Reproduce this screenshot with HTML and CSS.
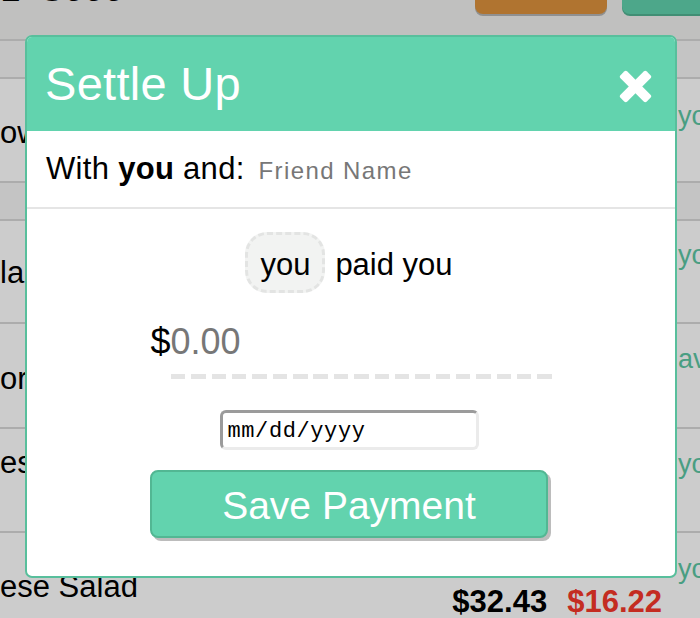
FILE: index.html
```html
<!DOCTYPE html>
<html lang="en">
<head>
<meta charset="utf-8">
<title>Settle Up</title>
<link rel="stylesheet" href="styles.css">
</head>
<body>
<div class="page">
  <header class="topbar">
    <h1 class="page-title">L&nbsp;&nbsp;Sooo</h1>
    <div class="actions">
      <button class="top-btn top-btn-orange" type="button"></button>
      <button class="top-btn top-btn-green" type="button"></button>
    </div>
  </header>
  <div class="band band-1"></div>
  <div class="row row-1"><span class="name">ow</span><span class="payer">you</span></div>
  <div class="band band-2"></div>
  <div class="row row-2"><span class="name">la</span><span class="payer">you</span></div>
  <div class="row row-3"><span class="name">orr</span><span class="payer">avid</span></div>
  <div class="row row-4"><span class="name">ese</span><span class="payer">you</span></div>
  <div class="row row-5">
    <span class="name">ese Salad</span>
    <span class="totals"><span class="total-owed">$32.43</span><span class="total-due">$16.22</span></span>
    <span class="payer">you</span>
  </div>
</div>

<div class="overlay"></div>

<div class="modal">
  <div class="modal-header">
    <h2 class="modal-title">Settle Up</h2>
    <button class="close-btn" type="button" aria-label="Close">
      <svg width="33" height="33" viewBox="-16.5 -16.5 33 33" aria-hidden="true">
        <rect x="-18.6" y="-4.8" width="37.2" height="9.6" rx="2.2" fill="#fff" transform="rotate(45)"/>
        <rect x="-18.6" y="-4.8" width="37.2" height="9.6" rx="2.2" fill="#fff" transform="rotate(-45)"/>
      </svg>
    </button>
  </div>
  <div class="with-row">With <b>you</b> and: <span class="friend-input">Friend Name</span></div>
  <div class="modal-body">
    <div class="paid-line">
      <span class="person-pill">you</span><span class="paid-text">paid you</span>
    </div>
    <div class="amount">
      <span class="currency">$</span><span class="amount-input">0.00</span>
    </div>
    <div class="date-input">mm/dd/yyyy</div>
    <button class="save-btn" type="button">Save Payment</button>
  </div>
</div>
</body>
</html>
```

FILE: styles.css
```css
html, body {
  margin: 0;
  padding: 0;
}

body {
  width: 700px;
  height: 618px;
  overflow: hidden;
  font-family: "Liberation Sans", Arial, Helvetica, sans-serif;
  color: #000;
  background: #fff;
}

.page {
  width: 700px;
  margin-top: -40px;
  overflow: hidden;
}

/* ---------- background page ---------- */
.topbar {
  display: flex;
  align-items: flex-start;
  height: 79px;
  background: #f0f1ef;
  border-bottom: 2px solid #d7d7d7;
}

.page-title {
  margin: 9px 0 0 0;
  font-size: 36px;
  line-height: 40px;
  font-weight: normal;
  white-space: nowrap;
}

.actions {
  display: flex;
  gap: 15px;
  margin-left: auto;
  margin-top: 4px;
}

.top-btn {
  height: 50px;
  border: 0;
  padding: 0;
  border-radius: 8px;
}

.top-btn-orange {
  width: 132px;
  background: #dc923c;
  box-shadow: 0 2px 0 #b4b4b4;
}

.top-btn-green {
  width: 78px;
  background: #61d1ad;
  border-radius: 8px 0 0 8px;
  box-shadow: 0 2px 0 #52b292;
}

.band {
  background: #f5f5f5;
  border-bottom: 2px solid #d7d7d7;
  height: 36px;
}

.row {
  display: flex;
  align-items: flex-start;
  background: #fff;
  border-bottom: 2px solid #d7d7d7;
  height: 101px;
}

.row-1 { height: 102px; }
.row-2 { height: 101px; }
.row-3 { height: 103px; }
.row-4 { height: 102px; }

.row-5 {
  height: 120px;
  border-bottom: 0;
}

.name {
  font-size: 31px;
  line-height: 34px;
  white-space: nowrap;
}

.payer {
  margin-left: auto;
  width: 22px;
  flex: 0 0 22px;
  overflow: hidden;
  white-space: nowrap;
  color: #5cc6a3;
  font-size: 27px;
  line-height: 30px;
  padding-top: 19px;
}

.row-1 .name { padding-top: 37px; }
.row-1 .payer { padding-top: 22px; }
.row-2 .name { padding-top: 35px; }
.row-3 .name { padding-top: 38px; }
.row-3 .payer { padding-top: 20px; }
.row-4 .name { padding-top: 17px; }
.row-4 .payer { padding-top: 20px; }
.row-5 .name { padding-top: 37px; }
.row-5 .payer { padding-top: 21px; margin-left: 16px; }

.totals {
  margin-left: auto;
  display: flex;
  gap: 20px;
  padding-top: 52px;
  font-size: 31px;
  line-height: 34px;
  font-weight: bold;
}

.total-due {
  color: #f5372a;
}

.overlay {
  position: fixed;
  inset: 0;
  background: rgba(0, 0, 0, 0.2);
}

/* ---------- modal ---------- */
.modal {
  position: fixed;
  left: 25px;
  top: 35px;
  width: 652px;
  height: 543px;
  box-sizing: border-box;
  border: 2px solid #58bf9c;
  border-radius: 7px;
  background: #fff;
  overflow: hidden;
}

.modal-header {
  display: flex;
  align-items: center;
  height: 94px;
  padding: 0 23px 0 18px;
  background: #62d3ae;
}

.modal-title {
  margin: 0;
  font-size: 47px;
  line-height: 94px;
  font-weight: normal;
  letter-spacing: 0.3px;
  color: #fff;
}

.close-btn {
  margin-left: auto;
  margin-top: 4px;
  padding: 0;
  border: 0;
  background: none;
  width: 33px;
  height: 33px;
  display: flex;
}

.with-row {
  height: 76px;
  padding-left: 19px;
  font-size: 31px;
  line-height: 76px;
  letter-spacing: 0.3px;
  border-bottom: 2px solid #e5e5e5;
  white-space: nowrap;
}

.friend-input {
  margin-left: 5px;
  font-size: 24px;
  letter-spacing: 1.4px;
  color: #777;
}

.modal-body {
  display: flex;
  flex-direction: column;
  align-items: center;
  padding-top: 23px;
}

.paid-line {
  display: flex;
  align-items: baseline;
  font-size: 31px;
  line-height: 36px;
  margin-left: -4px;
}

.person-pill {
  display: inline-block;
  padding: 12px 12px 7px;
  border: 3px dashed #e3e4e3;
  border-radius: 22px;
  background: #f2f3f2;
}

.paid-text {
  margin-left: 10px;
}

.amount {
  display: flex;
  align-items: flex-start;
  margin-top: 28px;
  font-size: 36px;
  line-height: 42px;
}

.currency {
  width: 20px;
}

.amount-input {
  width: 381px;
  padding-bottom: 16px;
  color: #777;
  background-image: repeating-linear-gradient(90deg, #e4e4e4 0 14.4px, transparent 14.4px 20.35px);
  background-size: 100% 5px;
  background-position: left bottom;
  background-repeat: no-repeat;
}

.date-input {
  margin-top: 31px;
  margin-left: -4px;
  width: 259px;
  height: 40px;
  box-sizing: border-box;
  padding: 5px 0 0 5px;
  border: 3px solid #ebebeb;
  border-top-color: #9b9b9b;
  border-left-color: #9b9b9b;
  border-radius: 6px;
  font-family: "Liberation Mono", "Courier New", monospace;
  font-size: 22px;
  line-height: 27px;
  letter-spacing: 0.6px;
  color: #000;
}

.save-btn {
  margin-top: 20px;
  margin-left: -4px;
  width: 398px;
  height: 68px;
  box-sizing: border-box;
  padding: 3px 0 0;
  border: 2px solid #52b793;
  border-radius: 8px;
  background: #62d3ae;
  box-shadow: 3px 3px 0 #bcbcbc;
  color: #fff;
  font-family: "Liberation Sans", Arial, Helvetica, sans-serif;
  font-size: 39px;
  line-height: 56px;
}
```
